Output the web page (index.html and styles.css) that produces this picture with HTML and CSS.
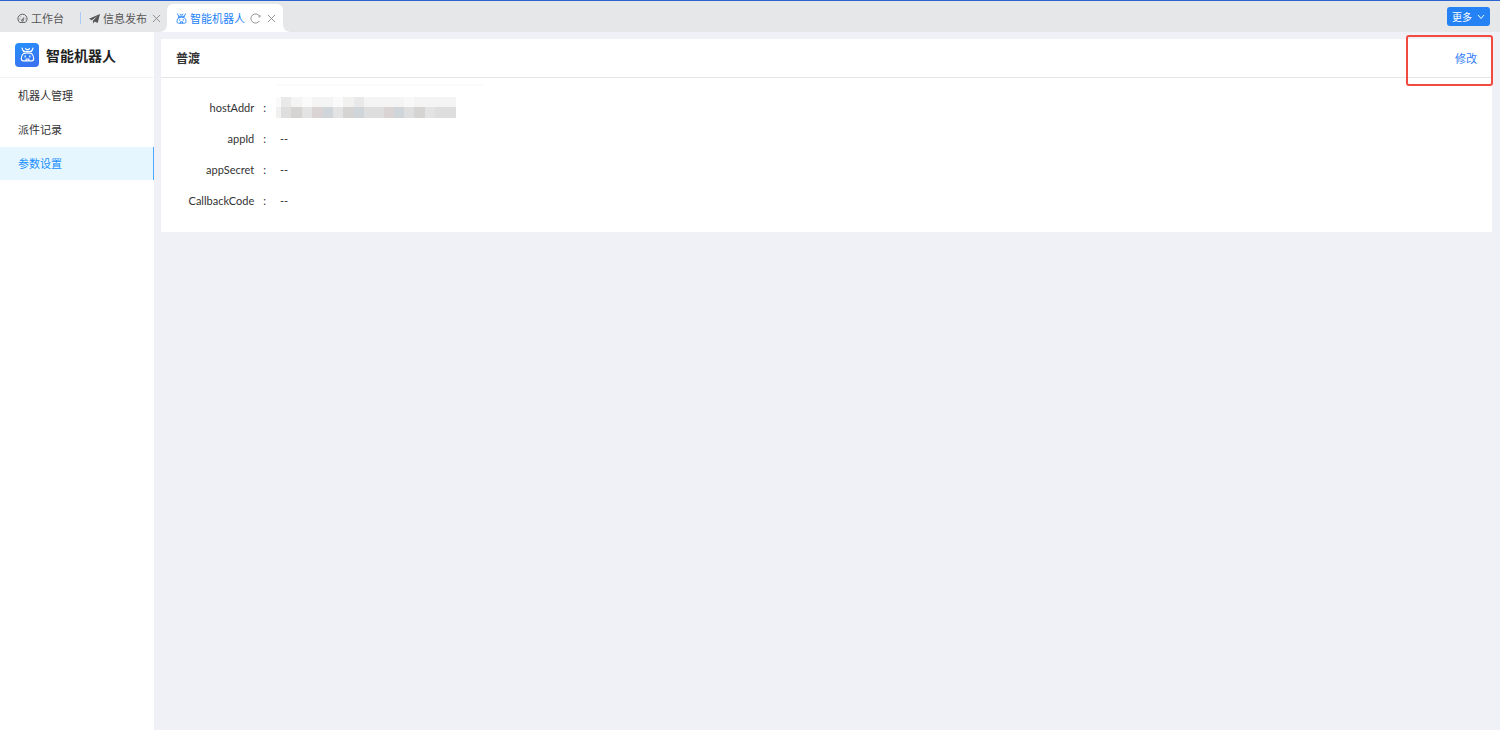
FILE: index.html
```
<!DOCTYPE html>
<html lang="zh-CN">
<head>
  <meta charset="UTF-8">
  <meta name="viewport" content="width=device-width, initial-scale=1.0">
  <title>智能机器人</title>
  <link rel="stylesheet" href="styles.css">
</head>
<body>

  <!-- 机器人图标 -->
  <svg class="symbols" aria-hidden="true">
    <symbol id="robot" viewBox="0 0 16 16">
      <g fill="none" stroke="currentColor" stroke-width="1.3" stroke-linecap="round" stroke-linejoin="round">
        <path d="M2.2 1.2 3 3.4 4.6 4.6M13.8 1.2 13 3.4 11.4 4.6M6 1.6 6.8 2.8H9.2L10 1.6"/>
        <path d="M3.6 4.8H12.4M3.8 6.8Q1.4 9 1.4 12.2Q1.4 14.8 3.4 14.8H12.6Q14.6 14.8 14.6 12.2Q14.6 9 12.2 6.8Q8 5.6 3.8 6.8Z"/>
        <path d="M5.5 9.4V10.6M10.5 9.4V10.6M6.5 14.5V12.8H9.5V14.5"/>
      </g>
    </symbol>
    <symbol id="close" viewBox="0 0 10 10">
      <path d="M1 1 9 9M9 1 1 9" fill="none" stroke="currentColor"/>
    </symbol>
  </svg>

  <!-- 顶部标签栏 -->
  <header class="topbar">
    <nav class="tabs">
      <div class="tab tab-home">
        <svg class="ico" viewBox="0 0 12 12" fill="none" stroke="currentColor">
          <path d="M3 10.3A5 5 0 1 1 9 10.3ZM6 8 7.5 4.8M2.7 6.5H3.6M8.6 6.5H9.4M4.2 4 4.7 4.5"/>
          <circle cx="6" cy="8" r="1"/>
        </svg>
        <a href="#">工作台</a>
      </div>
      <div class="tab tab-info">
        <svg class="ico" viewBox="0 0 12 12" fill="currentColor">
          <path d="M12 1 0 6.2 3 7.8 9.4 3.4 4.3 8.5V11.5L6.2 9.4 9.5 11Z"/>
        </svg>
        <a href="#">信息发布</a>
        <button type="button" class="btn-ico" aria-label="关闭信息发布"><svg class="ico-close"><use href="#close"/></svg></button>
      </div>
      <div class="tab on">
        <svg class="ico"><use href="#robot"/></svg>
        <a href="#">智能机器人</a>
        <button type="button" class="btn-ico reload" aria-label="刷新">
          <svg class="ico" viewBox="0 0 12 12" fill="none" stroke="currentColor">
            <path d="M10.3 8.6A5 5 0 1 1 10.3 3.4M10.9 2.2V4.2H9.2"/>
          </svg>
        </button>
        <button type="button" class="btn-ico" aria-label="关闭智能机器人"><svg class="ico-close"><use href="#close"/></svg></button>
      </div>
    </nav>
    <button type="button" class="btn-more">更多
      <svg class="ico-down" viewBox="0 0 8 8"><path d="M1 2 4 5.5 7 2" fill="none" stroke="currentColor"/></svg>
    </button>
  </header>

  <div class="container">
    <!-- 左侧菜单 -->
    <aside class="side">
      <h1 class="side-title">
        <span class="logo"><svg><use href="#robot"/></svg></span>
        智能机器人
      </h1>
      <ul class="menu">
        <li><a href="#">机器人管理</a></li>
        <li><a href="#">派件记录</a></li>
        <li><a href="#" class="on">参数设置</a></li>
      </ul>
    </aside>

    <!-- 参数设置 -->
    <main class="main">
      <section class="card">
        <div class="card-head">
          <h2>普渡</h2>
          <a href="#" class="link-edit">修改</a>
          <span class="mark"></span>
        </div>
        <dl class="params">
          <dt>hostAddr</dt>
          <dd class="masked">
            <!-- 地址打码 -->
            <svg viewBox="0 0 180 21" shape-rendering="crispEdges" role="img" aria-label="已隐藏">
              <path fill="#fbfbfb" d="M0 -13H207V-11H0Z"/>
              <path fill="#f4f4f4" d="M0 0H180V11H0Z"/>
              <path fill="#dedede" d="M5 10H180V21H5Z"/>
              <path fill="#fafafa" d="M0 0H5V11H0ZM26 0H36V10H26ZM57 0H67V10H57Z"/>
              <path fill="#e9e9e9" d="M5 0H15V10H5ZM78 0H88V10H78Z"/>
              <path fill="#f1f1ef" d="M67 0H78V10H67ZM0 10H5V21H0Z"/>
              <path fill="#f8f8f8" d="M128 0H138V10H128Z"/>
              <path fill="#d5d4d3" d="M15 10H26V21H15ZM67 10H78V21H67ZM138 10H149V21H138Z"/>
              <path fill="#e3e3e3" d="M26 10H36V21H26ZM57 10H67V21H57ZM149 10H159V21H149Z"/>
              <path fill="#dad5d4" d="M36 10H47V21H36ZM108 10H118V21H108Z"/>
              <path fill="#d0d5d9" d="M47 10H57V21H47ZM78 10H88V21H78ZM118 10H128V21H118Z"/>
            </svg>
          </dd>
          <dt>appId</dt>
          <dd>--</dd>
          <dt>appSecret</dt>
          <dd>--</dd>
          <dt>CallbackCode</dt>
          <dd>--</dd>
        </dl>
      </section>
    </main>
  </div>

</body>
</html>
```
FILE: styles.css
```
/* 初始化 */
* {
  padding: 0;
  margin: 0;
  box-sizing: border-box;
}
ul, dl {
  list-style-type: none;
}
a {
  color: inherit;
  text-decoration: none;
}
button {
  border: 0;
  background: none;
  font: inherit;
  color: inherit;
  cursor: pointer;
}
body {
  display: flex;
  flex-direction: column;
  min-height: 100vh;
  background-color: #eff1f6;
  font: 11px/16px "Noto Sans CJK SC", sans-serif;
  color: #333;
}
.symbols {
  display: none;
}

/* 顶部标签栏 */
.topbar {
  display: flex;
  justify-content: space-between;
  align-items: center;
  height: 32px;
  padding-right: 10px;
  border-top: 1px solid #2a65cf;
  background-color: #e6e7e9;
}
.tabs {
  display: flex;
  align-self: flex-end;
}
.tab {
  display: flex;
  align-items: center;
  height: 28px;
  padding: 0 6px 0 8px;
  color: #555;
}
.tab-home {
  padding: 0 16px 0 17px;
}
.tab-info::before {       /* 标签之间的竖线 */
  content: '';
  width: 1px;
  height: 12px;
  margin: 0 8px 0 -8px;
  background-color: #a9cbf5;
}
.ico {
  width: 11px;
  height: 11px;
  margin-right: 3px;
}
.btn-ico {
  display: flex;
  margin-left: 5px;
  color: #888;
}
.reload .ico {
  margin-right: 1px;
}
.ico-close {
  width: 9px;
  height: 9px;
}
.tab.on {
  position: relative;
  padding: 0 7px 0 9px;
  border-radius: 6px 6px 0 0;
  background-color: #fff;
  color: #2482f7;
}
.tab.on::before, .tab.on::after {     /* 标签底部两侧的圆弧 */
  content: '';
  position: absolute;
  bottom: 0;
  width: 6px;
  height: 6px;
}
.tab.on::before {
  right: 100%;
  background: radial-gradient(circle at 0 0, transparent 5px, #fff 6px);
}
.tab.on::after {
  left: 100%;
  background: radial-gradient(circle at 100% 0, transparent 5px, #fff 6px);
}
.btn-more {
  display: flex;
  align-items: center;
  gap: 5px;
  height: 19px;
  padding: 0 5px;
  border-radius: 3px;
  background-color: #2482f5;
  font-size: 10px;
  color: #fff;
}
.ico-down {
  width: 8px;
  height: 8px;
}

.container {
  display: flex;
  flex: 1;
}

/* 左侧菜单 */
.side {
  width: 154px;
  background-color: #fff;
}
.side-title {
  display: flex;
  align-items: center;
  gap: 7px;
  height: 46px;
  padding-left: 15px;
  border-bottom: 1px solid #f3f3f3;
  font-size: 14px;
  color: #222;
}
.logo {
  display: flex;
  align-items: center;
  justify-content: center;
  width: 24px;
  height: 24px;
  border-radius: 4px;
  background: linear-gradient(160deg, #2491fb, #3d6df0);
  color: #fff;
}
.logo svg {
  width: 15px;
  height: 15px;
}
.menu a {
  display: block;
  height: 33px;
  margin-top: 1px;
  padding-left: 18px;
  line-height: 33px;
}
.menu .on {
  border-right: 1px solid #4ba8fa;
  background-color: #e6f6ff;
  color: #1890ff;
}

/* 右侧内容 */
.main {
  flex: 1;
  padding: 7px 8px 7px 7px;
}
.card {
  background-color: #fff;
}
.card-head {
  position: relative;
  display: flex;
  justify-content: space-between;
  align-items: center;
  height: 39px;
  padding: 0 15px;
  border-bottom: 1px solid #e5e5e5;
}
.card-head h2 {
  font-size: 12px;
}
.link-edit {
  color: #2e7cf6;
}
.mark {                   /* 修改入口的红框提示 */
  position: absolute;
  top: -4px;
  right: -1px;
  width: 87px;
  height: 51px;
  border: 2px solid #f04a41;
  border-radius: 3px;
  pointer-events: none;
}
.params {
  display: grid;
  grid-template-columns: 108px 1fr;
  row-gap: 10px;
  padding: 19px 0 21px;
  font-family: Lato, "Noto Sans CJK SC", sans-serif;
  line-height: 21px;
}
.params dt {
  padding-right: 3px;
  text-align: right;
  white-space: nowrap;
}
.params dt::after {
  content: ':';
  margin: 0 0 0 9px;
}
.params dd {
  padding-left: 11px;
}
.params .masked {
  padding-left: 7px;
}
.masked svg {
  display: block;
  width: 180px;
  height: 21px;
  overflow: visible;
}
```
